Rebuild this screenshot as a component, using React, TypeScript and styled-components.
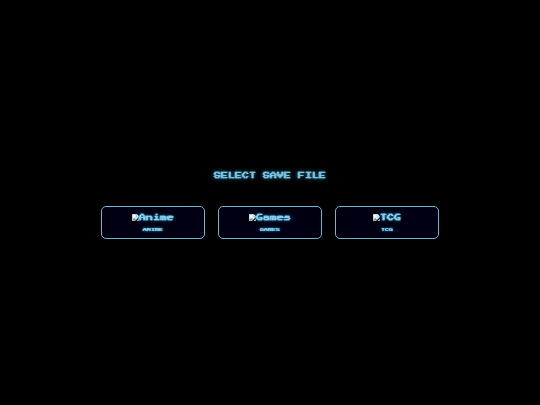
import React from "react";
import styled, { createGlobalStyle } from "styled-components";

const GlobalStyle = createGlobalStyle`
  * { box-sizing: border-box; }
  body {
    margin: 0;
    background: #000;
    font-family: "Press Start 2P", "DejaVu Sans Mono", monospace;
  }
`;

const Screen = styled.main`
  min-height: 100vh;
  display: flex;
  flex-direction: column;
  align-items: center;
  justify-content: center;
  gap: 20px;
  color: #87ceeb;
`;

const Heading = styled.h1`
  margin: 0;
  font-size: 7px;
  line-height: 20px;
  font-weight: 700;
  color: #7cc3df;
  text-shadow: 0 0 1px #3f86a0, 0 0 4px #2f86a4;
`;

const SaveList = styled.div`
  display: flex;
  flex-wrap: wrap;
  justify-content: center;
  gap: 13px;
`;

const SaveCard = styled.button`
  width: 104px;
  padding: 6px 7px 4px;
  display: flex;
  flex-direction: column;
  align-items: center;
  gap: 3px;
  background: #000012;
  border: 1px solid #76b4cd;
  border-radius: 5px;
  color: inherit;
  font-family: inherit;
  font-weight: 700;
  text-shadow: 0 0 1px #4c9cc0, 0 0 3px #2a8fbd;
  cursor: pointer;
`;

const Cover = styled.span`
  display: flex;
  align-items: center;
  font-size: 7px;
  line-height: 10px;
`;

const Label = styled.span`
  font-size: 4px;
  line-height: 8px;
`;

const BrokenIcon = styled.svg`
  width: 7px;
  height: 8px;
  flex: none;
`;

function MissingPicture() {
  return (
    <BrokenIcon viewBox="0 0 14 16" aria-hidden="true">
      <path d="M0 0H9L14 5V14H0Z" fill="#b4bcc6" />
      <path d="M1 1H8V6H13V7L7 13H1Z" fill="#e2e6f4" />
      <path d="M9 0L14 5H9Z" fill="#f5f8fa" />
      <circle cx="4" cy="4" r="2" fill="#fff" />
      <path d="M1 13V11L5 8L8 11L6 13Z" fill="#6aa862" />
      <path d="M14 6V9L9 14H6Z" fill="#000012" />
      <path d="M14 10V14H10Z" fill="#91bd83" />
    </BrokenIcon>
  );
}

const saves = [
  { alt: "Anime", label: "ANIME" },
  { alt: "Games", label: "GAMES" },
  { alt: "TCG", label: "TCG" },
];

export default function App() {
  return (
    <>
      <GlobalStyle />
      <Screen>
        <Heading>SELECT SAVE FILE</Heading>
        <SaveList>
          {saves.map((save) => (
            <SaveCard key={save.label} type="button">
              <Cover>
                <MissingPicture />
                {save.alt}
              </Cover>
              <Label>{save.label}</Label>
            </SaveCard>
          ))}
        </SaveList>
      </Screen>
    </>
  );
}
